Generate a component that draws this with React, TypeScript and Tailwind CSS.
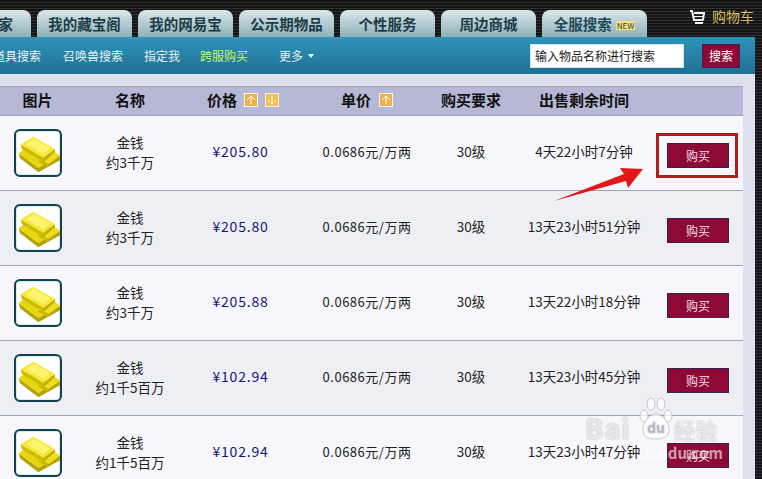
const font = "[font-family:'Noto_Sans_CJK_SC','Liberation_Sans',sans-serif]";

const tabs = ["家", "我的藏宝阁", "我的网易宝", "公示期物品", "个性服务", "周边商城"];

const rows = [
  { name: "约3千万", price: "205.80", time: "4天22小时7分钟" },
  { name: "约3千万", price: "205.80", time: "13天23小时51分钟" },
  { name: "约3千万", price: "205.88", time: "13天22小时18分钟" },
  { name: "约1千5百万", price: "102.94", time: "13天23小时45分钟" },
  { name: "约1千5百万", price: "102.94", time: "13天23小时47分钟" },
];

const GoldIcon = () => (
  <div className="flex h-12 w-12 items-center justify-center rounded-md border-2 border-[#12414f] bg-white shadow-[inset_0_0_0_1px_#d4ecf2]">
    <svg width="44" height="44" viewBox="18 18 132 132">
      <polygon points="26,85 85,128 150,92 152,105 85,142 30,100" fill="#b5a30a" />
      <polygon points="26,85 48,68 120,90 150,92 85,128" fill="#e8d60f" />
      <polygon points="118,68 150,92 115,118 90,100" fill="#efdd20" />
      <polygon points="90,100 115,118 115,126 85,110" fill="#c9b70c" />
      <polygon points="32,58 100,98 100,112 35,72" fill="#cdbb0c" />
      <polygon points="100,98 135,72 135,82 100,112" fill="#c2b00a" />
      <polygon points="32,58 70,35 135,72 100,98" fill="#f6e83a" />
      <polygon points="48,58 72,41 120,70 100,87" fill="#fcf46e" />
    </svg>
  </div>
);

const SortArrow = ({ up, tone }: { up: boolean; tone: string }) => (
  <span className={`flex h-[14px] w-[14px] items-center justify-center border border-[#fdf6dc] ${tone}`}>
    <svg width="10" height="10" viewBox="0 0 10 10" fill="none" stroke="white" strokeWidth="1">
      {up ? <path d="M5 9V1M1 5 5 1 9 5" /> : <path d="M5 1v8M1 5 5 9 9 5" />}
    </svg>
  </span>
);

const colClass =
  "grid grid-cols-[75px_110px_111px_142px_66px_160px_78px] items-center text-center";

export default function App() {
  return (
    <div
      className={`relative flex h-[479px] w-[762px] flex-col overflow-hidden bg-[repeating-linear-gradient(180deg,#141414_0px,#141414_2px,#303030_2px,#303030_3px)] ${font}`}
    >
      {/* top tabs */}
      <div className="flex h-[37px] shrink-0 items-end">
        <div className="ml-[-64px] flex gap-[6px]">
          {tabs.map((t, i) => (
            <div
              key={t}
              className={`flex h-[27px] items-center justify-center rounded-t-lg bg-gradient-to-b from-[#dce8ea] to-[#8db0b9] text-[14.5px] font-bold text-[#1c3c48] ${
                i === 0 ? "w-[95px] justify-end pr-[18px]" : "w-[95px]"
              }`}
            >
              {t}
            </div>
          ))}
          <div className="flex h-[27px] w-[105px] items-center justify-center gap-1 rounded-t-lg bg-gradient-to-b from-[#dce8ea] to-[#8db0b9] text-[14.5px] font-bold text-[#1c4a58]">
            全服搜索
            <span className="mt-1 bg-[#f3e28a] px-px text-[8px] leading-[9px] font-normal text-[#3a3a20]">
              NEW
            </span>
          </div>
        </div>
        <div className="mb-[10px] ml-[43px] flex items-center gap-[6px] text-[14px] text-[#d8bd62]">
          <svg width="16" height="16" viewBox="0 0 16 16" fill="none" stroke="#f4f4f4" strokeWidth="2">
            <path d="M0 2h2l2 9h9M4 4h10l-1 7" />
            <path d="M4 7.5h9" strokeWidth="1" />
            <path d="M5 14h8" />
          </svg>
          购物车
        </div>
      </div>

      {/* search nav */}
      <div className="flex h-[37px] w-[755px] shrink-0 items-center bg-gradient-to-b from-[#2f94bc] to-[#1f6f92] text-[12px] text-[#e6f2f4]">
        <span className="ml-[-7px]">道具搜索</span>
        <span className="ml-[22px]">召唤兽搜索</span>
        <span className="ml-[21px]">指定我</span>
        <span className="ml-[20px] text-[#c8f560]">跨服购买</span>
        <span className="ml-[31px] flex items-center gap-[5px]">
          更多
          <span className="h-0 w-0 border-x-[3px] border-t-[4px] border-x-transparent border-t-white" />
        </span>
        <div className="ml-[216px] flex h-6 w-[154px] items-center border border-[#cfe6ef] bg-white pl-1 text-[12px] text-[#222]">
          输入物品名称进行搜索
        </div>
        <button className="ml-[18px] h-6 w-[38px] border border-[#3a2050] bg-[#8c0a35] text-[12px] text-white">
          搜索
        </button>
      </div>

      {/* list panel */}
      <div className="w-[755px] flex-1 bg-[#dfe0ee] pt-3">
        <div className="w-[743px]">
          <div
            className={`${colClass} h-[30px] border-y border-[#9da0bf] bg-[#b6b9d6] pb-[2px] text-[15px] font-bold text-[#111]`}
          >
            <span>图片</span>
            <span>名称</span>
            <span className="flex items-center justify-center gap-[7px] pl-[5px]">
              价格
              <SortArrow up tone="bg-[#eeb04e]" />
              <SortArrow up={false} tone="bg-[#f0c050]" />
            </span>
            <span className="flex items-center justify-center gap-[8px]">
              单价
              <SortArrow up tone="bg-[#eeb04e]" />
            </span>
            <span>购买要求</span>
            <span>出售剩余时间</span>
            <span />
          </div>
          {rows.map((r, i) => (
            <div
              key={i}
              className={`${colClass} h-[75px] border-b border-[#a0a3bd] pb-[3px] text-[13.5px] text-[#222] ${
                i % 2 === 0 ? "bg-[#f7f7fb]" : "bg-[#eeeef5]"
              }`}
            >
              <div className="mt-[2px] flex justify-center">
                <GoldIcon />
              </div>
              <div className="leading-[20px]">
                金钱
                <br />
                {r.name}
              </div>
              <div className="text-[14px] tracking-[0.8px] text-[#16167a]">¥{r.price}</div>
              <div className="text-[13px] tracking-[0.5px]">0.0686元/万两</div>
              <div>30级</div>
              <div className="whitespace-nowrap">{r.time}</div>
              <div className="mt-[8px] pr-[10px]">
                <button className="h-[25px] w-[62px] border border-[#3a2050] bg-[#8c0a35] text-[12px] text-[#f3dfe6]">
                  购买
                </button>
              </div>
            </div>
          ))}
        </div>
      </div>

      {/* screenshot annotations */}
      <div className="absolute left-[656px] top-[133px] h-[45px] w-[82px] border-[3px] border-[#b01c1c]" />
      <svg className="absolute left-[550px] top-[160px]" width="100" height="45" viewBox="0 0 100 45">
        <path d="M4 41 74 14 70 8 93 9 78 28 76 21Z" fill="#e01818" />
      </svg>

      {/* watermark */}
      <div className="pointer-events-none absolute left-[585px] top-[397px] flex h-[46px] items-end text-white/70 [text-shadow:0_0_2px_rgba(110,110,130,0.6)]">
        <span className="mb-[2px] text-[27px] leading-none font-bold tracking-[1px]">Bai</span>
        <svg width="34" height="46" viewBox="0 0 34 46" className="ml-[8px]" fill="rgba(255,255,255,0.7)" stroke="rgba(130,130,150,0.4)">
          <ellipse cx="5" cy="19" rx="4" ry="6" />
          <ellipse cx="12" cy="7" rx="4" ry="6" />
          <ellipse cx="22" cy="7" rx="4" ry="6" />
          <ellipse cx="29" cy="19" rx="4" ry="6" />
          <path d="M17 17c-7 0-13 8-13 16 0 6 4 9 13 9s13-3 13-9c0-8-6-16-13-16Z" />
          <text x="17" y="36" textAnchor="middle" fontSize="14" fontWeight="700" fill="rgba(170,170,185,0.7)" stroke="none">
            du
          </text>
        </svg>
        <span className="mb-[3px] ml-[1px] text-[22px] leading-none">经验</span>
      </div>
      <div className="pointer-events-none absolute left-[640px] top-[442px] text-[15px] font-bold text-white/60">
        .baidu.com
      </div>
    </div>
  );
}
